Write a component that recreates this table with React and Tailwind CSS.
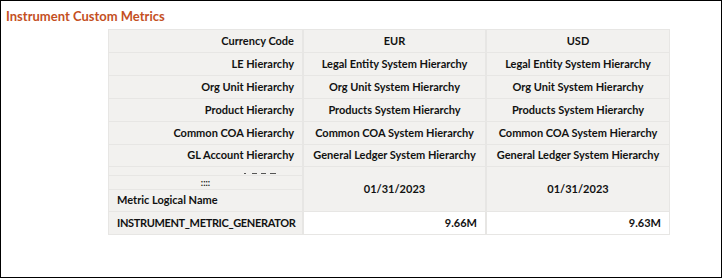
import React from "react";

const rows = [
  ["Currency Code", "EUR", "USD"],
  ["LE Hierarchy", "Legal Entity System Hierarchy", "Legal Entity System Hierarchy"],
  ["Org Unit Hierarchy", "Org Unit System Hierarchy", "Org Unit System Hierarchy"],
  ["Product Hierarchy", "Products System Hierarchy", "Products System Hierarchy"],
  ["Common COA Hierarchy", "Common COA System Hierarchy", "Common COA System Hierarchy"],
  ["GL Account Hierarchy", "General Ledger System Hierarchy", "General Ledger System Hierarchy"],
];

const heights = ["h-[22px]", "h-[22px]", "h-[22px]", "h-[22px]", "h-[22px]", "h-[21px]"];

export default function App() {
  return (
    <div
      className="w-[722px] h-[278px] border border-black bg-white text-[#111111]"
      style={{ fontFamily: "Lato, 'Noto Sans', sans-serif" }}
    >
      <div className="pl-[5px] pt-[7px] text-[13px] leading-[16px] font-bold text-[#c4501f]">
        Instrument Custom Metrics
      </div>
      <div className="ml-[107px] mt-[5px] inline-grid grid-cols-[193px_181px_182px] gap-x-[2px] gap-y-px bg-[#e7e6e4] p-px text-[11px] font-bold">
        {rows.map((r, i) => (
          <React.Fragment key={i}>
            <div className={`${heights[i]} bg-[#f2f1ef] flex items-center justify-end pr-[8px]`}>{r[0]}</div>
            <div className={`${heights[i]} bg-[#f2f1ef] flex items-center justify-center`}>{r[1]}</div>
            <div className={`${heights[i]} bg-[#f2f1ef] flex items-center justify-center`}>{r[2]}</div>
          </React.Fragment>
        ))}
        <div className="h-[8px] bg-[#f2f1ef] flex items-end justify-end gap-[3px] pr-[26px] pb-[1px]">
          <span className="w-[2px] h-px bg-[#555]" />
          <span className="w-[5px] h-px bg-[#555] ml-[3px]" />
          <span className="w-[5px] h-px bg-[#555] ml-[1px]" />
          <span className="w-[6px] h-px bg-[#555] ml-[1px]" />
        </div>
        <div className="row-span-3 bg-[#f2f1ef] flex items-center justify-center">01/31/2023</div>
        <div className="row-span-3 bg-[#f2f1ef] flex items-center justify-center">01/31/2023</div>
        <div className="h-[13px] bg-[#f2f1ef] flex items-center justify-center text-[9px] leading-[12px]">::::</div>
        <div className="h-[21px] bg-[#f2f1ef] flex items-center pl-[8px]">Metric Logical Name</div>
        <div className="h-[22px] bg-[#f2f1ef] flex items-center pl-[8px] tracking-[-0.35px]">INSTRUMENT_METRIC_GENERATOR</div>
        <div className="h-[22px] bg-white flex items-center justify-end pr-[8px]">9.66M</div>
        <div className="h-[22px] bg-white flex items-center justify-end pr-[8px]">9.63M</div>
      </div>
    </div>
  );
}
